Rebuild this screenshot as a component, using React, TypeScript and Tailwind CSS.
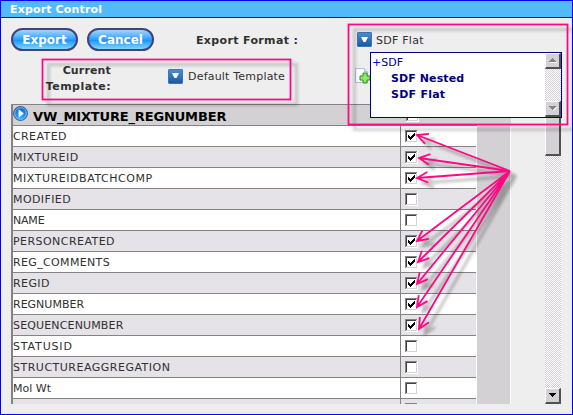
import React from 'react';

const fields: { name: string; checked: boolean; spacing: string }[] = [
  { name: 'CREATED', checked: true, spacing: 'tracking-[0.4px]' },
  { name: 'MIXTUREID', checked: true, spacing: 'tracking-[0.5px]' },
  { name: 'MIXTUREIDBATCHCOMP', checked: true, spacing: 'tracking-[0.55px]' },
  { name: 'MODIFIED', checked: false, spacing: 'tracking-[0.4px]' },
  { name: 'NAME', checked: false, spacing: 'tracking-[-0.2px]' },
  { name: 'PERSONCREATED', checked: true, spacing: 'tracking-[0.45px]' },
  { name: 'REG_COMMENTS', checked: true, spacing: 'tracking-[0.35px]' },
  { name: 'REGID', checked: true, spacing: 'tracking-[0.4px]' },
  { name: 'REGNUMBER', checked: true, spacing: 'tracking-[0px]' },
  { name: 'SEQUENCENUMBER', checked: true, spacing: 'tracking-[0.15px]' },
  { name: 'STATUSID', checked: false, spacing: 'tracking-[0.85px]' },
  { name: 'STRUCTUREAGGREGATION', checked: false, spacing: 'tracking-[0.5px]' },
  { name: 'Mol Wt', checked: false, spacing: 'tracking-[0px]' },
];

// Tip coordinates of the callout arrows, one per ticked row.
const tips: [number, number][] = [
  [417, 135],
  [419, 158],
  [417, 178],
  [417, 241],
  [418, 262],
  [417, 284],
  [417, 307],
  [419, 329],
];
const ORIGIN: [number, number] = [510, 171];

function arrowPath([x, y]: [number, number]) {
  const a = Math.atan2(ORIGIN[1] - y, ORIGIN[0] - x);
  const p = (d: number) => `${(x + 12 * Math.cos(a + d)).toFixed(1)} ${(y + 12 * Math.sin(a + d)).toFixed(1)}`;
  return `M${ORIGIN[0]} ${ORIGIN[1]}L${x} ${y}M${p(0.46)}L${x} ${y}L${p(-0.46)}`;
}

function Checkbox({ checked }: { checked: boolean }) {
  return (
    <svg width="13" height="13" viewBox="0 0 13 13" shapeRendering="crispEdges" className="block shrink-0">
      <path fill="#d6d3ce" d="M0 0h13v13H0z" />
      <path fill="#848284" d="M0 0h12v1H1v11H0z" />
      <path fill="#424142" d="M1 1h10v1H2v9H1z" />
      <path fill="#fff" d="M2 2h9v9H2zM12 0h1v13H0v-1h12z" />
      {checked && <path fill="#000" d="M3 5h1v3H3zM4 6h1v3H4zM5 7h1v3H5zM6 6h1v3H6zM7 5h1v3H7zM8 4h1v3H8zM9 3h1v3H9z" />}
    </svg>
  );
}

function DropButton() {
  return (
    <span className="flex h-[15px] w-[15px] shrink-0 items-center justify-center rounded-[1px] border border-[#3977b5] bg-linear-to-b from-[#4a8ece] to-[#185aa5]">
      <svg width="7" height="6" viewBox="0 0 7 6" className="block">
        <path fill="#fff" d="M0 0h7L4.5 5h-2z" />
      </svg>
    </span>
  );
}

function ScrollArrow({ up, dim }: { up?: boolean; dim?: boolean }) {
  return (
    <span className="flex h-4 w-4 shrink-0 items-center justify-center border-t border-r-2 border-b-2 border-l border-t-white border-r-[#525152] border-b-[#525152] border-l-white bg-[#d3d1d3]">
      <svg width="8" height="5" viewBox="0 0 8 5" shapeRendering="crispEdges" className="block">
        {dim && <path fill="#fff" d={up ? 'M1 4h7v1H1z' : 'M7 1h1v1H7zM6 2h1v1H6zM5 3h1v1H5zM4 4h1v1H4z'} />}
        <path
          fill={dim ? '#848284' : '#000'}
          d={up ? 'M0 3h7v1H0zM1 2h5v1H1zM2 1h3v1H2zM3 0h1v1H3z' : 'M0 0h7v1H0zM1 1h5v1H1zM2 2h3v1H2zM3 3h1v1H3z'}
        />
      </svg>
    </span>
  );
}

const checker = 'bg-[repeating-conic-gradient(#ffffff_0_25%,#d3d1d3_0_50%)] bg-[length:2px_2px]';

function PillButton({ label }: { label: string }) {
  return (
    <button className="flex h-[23px] w-[67px] items-center justify-center rounded-full border-2 border-[#42417b] bg-linear-to-b from-[#9cd7ff] via-[#1896ff] via-55% to-[#7bd7ff] text-[12px] leading-none font-bold text-white">
      {label}
    </button>
  );
}

export default function App() {
  return (
    <div className="relative flex h-[415px] w-[573px] flex-col overflow-hidden border border-[#0000ff] bg-[#eeeeee] font-['DejaVu_Sans',Verdana,sans-serif] text-[11px] leading-4 text-[#313031]">
      <header className="flex h-[17px] shrink-0 items-center border-b border-[#0000ff] bg-[#52bafa] pl-[9px] pt-[2px] font-bold text-white">
        <span className="tracking-[0.15px]">Export Control</span>
      </header>

      <div className="flex h-[86px] shrink-0 pt-[10px] pl-[10px]">
        <div className="w-[346px]">
          <div className="flex h-[23px] items-center gap-[9px]">
            <PillButton label="Export" />
            <PillButton label="Cancel" />
            <span className="ml-[33px] pt-[2px] font-bold tracking-[0.35px] whitespace-nowrap">Export Format :</span>
          </div>
          <div className="flex pt-[11px]">
            <div className="w-[100px] pt-px text-right font-bold">
              <span className="tracking-[0.15px]">Current</span>
              <br />
              <span className="tracking-[0.45px]">Template:</span>
            </div>
            <div className="ml-[57px] flex h-[26px] items-center gap-[5px] whitespace-nowrap pt-[2px]">
              <DropButton />
              <span className="pt-[2px] tracking-[0.2px]">Default Template</span>
            </div>
          </div>
        </div>
        <div>
          <div className="flex h-4 items-center gap-1 pt-[7px]">
            <DropButton />
            <span className="pt-[3px] tracking-[0.25px] whitespace-nowrap">SDF Flat</span>
          </div>
          <svg width="17" height="17" viewBox="0 0 17 17" className="mt-[24px] -ml-[2px] block">
            <path d="M.5.5h9l3 3v11H.5z" fill="#fff" stroke="#a5c7de" />
            <path d="M9.500.5v3h3" fill="#deebf7" stroke="#a5c7de" />
            <path d="M8 5h4v3h3v4h-3v3H8v-3H5V8h3z" fill="#8ceb63" stroke="#318a29" />
          </svg>
        </div>
      </div>

      <div className="flex h-[300px] shrink-0 pl-[10px]">
        <div className="w-[500px] overflow-hidden border-t border-l-2 border-[#848284]">
          <div className="flex h-[21px] items-center bg-[#d3d1d3]">
            <div className="flex h-[21px] w-[464px] items-center border-b border-[#848284]">
              <svg width="15" height="15" viewBox="0 0 16 16" className="-mt-1 block">
                <defs>
                  <radialGradient id="play" cx="50%" cy="75%" r="75%">
                    <stop offset="0" stopColor="#31b6ff" />
                    <stop offset="1" stopColor="#085ac6" />
                  </radialGradient>
                </defs>
                <circle cx="8" cy="8" r="7.4" fill="url(#play)" stroke="#315a94" />
                <circle cx="8" cy="8" r="6.200" fill="none" stroke="#a5d7ff" strokeWidth=".8" />
                <path d="M6 3.500v9L11.500 8z" fill="#fff" />
              </svg>
              <span className="ml-[5px] pt-[3px] text-[13px] leading-4 font-bold tracking-[-0.15px] text-black">VW_MIXTURE_REGNUMBER</span>
              <span className="mt-px mr-[58px] ml-auto">
                <Checkbox checked={false} />
              </span>
            </div>
          </div>
          <div className="flex h-[278px] bg-[#d3d1d3]">
            <div className="w-[463px] overflow-hidden">
              {fields.map((f, i) => (
                <div key={f.name} className={`flex h-[21px] items-center border-b border-[#848284] ${i % 2 ? 'bg-[#e5e3e7]' : 'bg-white'}`}>
                  <span className={`w-[387px] pt-[2px] ${f.spacing}`}>{f.name}</span>
                  <span className="flex h-5 flex-1 border-l border-[#848284] pt-1 pl-1">
                    <Checkbox checked={f.checked} />
                  </span>
                </div>
              ))}
              <div className="flex h-[21px] bg-[#e5e3e7]">
                <span className="ml-[387px] border-l border-[#848284] pt-1 pl-1">
                  <Checkbox checked={false} />
                </span>
              </div>
            </div>
            <div className="flex-1 border-x border-white" />
          </div>
        </div>
        <div className={`ml-[34px] flex w-4 flex-col justify-between ${checker}`}>
          <div className="h-[52px] border-t border-r-2 border-b-2 border-l border-t-white border-r-[#525152] border-b-[#525152] border-l-white bg-[#d3d1d3]" />
          <ScrollArrow />
        </div>
      </div>

      {/* Open format list */}
      <div className="absolute top-[51px] left-[369px] flex h-[66px] w-[192px] border border-[#000084] bg-white text-[#000084]">
        <div className="flex-1 pt-[2px] pl-px">
          <div>
            <span className="text-[#0000ff]">+</span>SDF
          </div>
          <div className="pl-[19px] font-bold tracking-[0.1px]">SDF Nested</div>
          <div className="pl-[19px] font-bold tracking-[0.25px]">SDF Flat</div>
        </div>
        <div className={`flex w-4 flex-col justify-between ${checker}`}>
          <ScrollArrow up dim />
          <ScrollArrow dim />
        </div>
      </div>

      {/* Callouts */}
      <svg width="573" height="415" viewBox="0 0 573 415" className="pointer-events-none absolute -top-px -left-px">
        <defs>
          <filter id="soft" filterUnits="userSpaceOnUse" x="0" y="0" width="573" height="415">
            <feGaussianBlur stdDeviation="1.500" />
          </filter>
        </defs>
        <g fill="none" stroke="#000" filter="url(#soft)" transform="translate(6 5)">
          <rect x="42.500" y="59.500" width="248" height="40" strokeWidth="3" opacity=".18" />
          <rect x="348.500" y="24.500" width="219" height="100" strokeWidth="3" opacity=".18" />
          <path d={tips.map(arrowPath).join('')} strokeWidth="2.500" opacity=".28" />
        </g>
        <g fill="none" stroke="#ff0884" strokeWidth="1.800">
          <rect x="42.500" y="59.500" width="248" height="40" />
          <rect x="348.500" y="24.500" width="219" height="100" />
          <path d={tips.map(arrowPath).join('')} />
        </g>
      </svg>
    </div>
  );
}
